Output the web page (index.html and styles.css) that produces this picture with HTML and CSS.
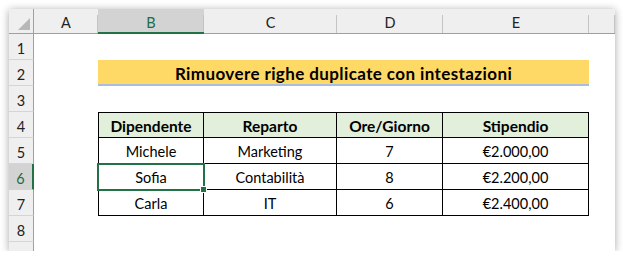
FILE: index.html
```html
<!DOCTYPE html>
<html lang="en">
<head>
  <meta charset="UTF-8">
  <title>Rimuovere righe duplicate</title>
  <link rel="stylesheet" href="styles.css">
</head>
<body>
  <div class="window">
    <div class="sheet">
      <!-- column headers -->
      <div class="corner"><span class="tri"></span></div>
      <div class="col-head">A</div>
      <div class="col-head active">B</div>
      <div class="col-head">C</div>
      <div class="col-head">D</div>
      <div class="col-head">E</div>
      <div class="col-head"></div>

      <!-- row 1 -->
      <div class="row-head">1</div>
      <div class="cell"></div><div class="cell"></div><div class="cell"></div><div class="cell"></div><div class="cell"></div><div class="cell"></div>

      <!-- row 2 -->
      <div class="row-head">2</div>
      <div class="cell"></div>
      <div class="title">Rimuovere righe duplicate con intestazioni</div>
      <div class="cell"></div>

      <!-- row 3 -->
      <div class="row-head">3</div>
      <div class="cell"></div><div class="cell"></div><div class="cell"></div><div class="cell"></div><div class="cell"></div><div class="cell"></div>

      <!-- row 4 -->
      <div class="row-head">4</div>
      <div class="cell"></div>
      <div class="t th first">Dipendente</div>
      <div class="t th">Reparto</div>
      <div class="t th">Ore/Giorno</div>
      <div class="t th">Stipendio</div>
      <div class="cell"></div>

      <!-- row 5 -->
      <div class="row-head">5</div>
      <div class="cell"></div>
      <div class="t first">Michele</div>
      <div class="t">Marketing</div>
      <div class="t">7</div>
      <div class="t">€2.000,00</div>
      <div class="cell"></div>

      <!-- row 6 -->
      <div class="row-head active">6</div>
      <div class="cell"></div>
      <div class="t first selected">Sofia</div>
      <div class="t">Contabilità</div>
      <div class="t">8</div>
      <div class="t">€2.200,00</div>
      <div class="cell"></div>

      <!-- row 7 -->
      <div class="row-head">7</div>
      <div class="cell"></div>
      <div class="t first">Carla</div>
      <div class="t">IT</div>
      <div class="t">6</div>
      <div class="t">€2.400,00</div>
      <div class="cell"></div>

      <!-- row 8 -->
      <div class="row-head">8</div>
      <div class="cell"></div><div class="cell"></div><div class="cell"></div><div class="cell"></div><div class="cell"></div><div class="cell"></div>

      <!-- row 9 -->
      <div class="row-head"></div>
      <div class="cell"></div><div class="cell"></div><div class="cell"></div><div class="cell"></div><div class="cell"></div><div class="cell"></div>
    </div>
  </div>
</body>
</html>
```

FILE: styles.css
```css
body {
  margin: 0;
  background: #ffffff;
  font-family: 'Lato', 'Liberation Sans', sans-serif;
  color: #000;
}
.window {
  margin: 9px 0 0 9px;
  width: 606px;
  height: 242px;
  overflow: hidden;
  background: #fff;
  box-shadow: 0 1px 8px rgba(0, 0, 0, 0.35);
}
.sheet {
  display: grid;
  grid-template-columns: 25px 64px 106px 133px 106px 146px 26px;
  grid-template-rows: 25px repeat(9, 26px);
  font-size: 14.5px;
}
.corner {
  background: #efefef;
  border-right: 1px solid #a0a0a0;
  border-bottom: 1px solid #a0a0a0;
  box-sizing: border-box;
  display: flex;
  align-items: flex-end;
  justify-content: flex-end;
  padding: 0 3px 3px 0;
}
.tri {
  width: 0;
  height: 0;
  border-left: 12px solid transparent;
  border-bottom: 12px solid #b7b7b7;
}
.col-head {
  background: linear-gradient(#c4c4c4, #c4c4c4) right 6px / 1px calc(100% - 6px) no-repeat, #efefef;
  border-bottom: 1px solid #a0a0a0;
  box-sizing: border-box;
  display: flex;
  align-items: center;
  justify-content: center;
  padding-top: 3px;
  color: #222;
}
.col-head.active {
  background-color: #d3d3d3;
  border-bottom: 2px solid #217346;
  color: #1e6b45;
}
.row-head {
  background: #efefef;
  border-right: 1px solid #a0a0a0;
  border-bottom: 1px solid #d5d5d5;
  box-sizing: border-box;
  display: flex;
  align-items: center;
  justify-content: center;
  padding-top: 4px;
  color: #222;
}
.row-head.active {
  background: #d3d3d3;
  border-right: 2px solid #217346;
  color: #1e6b45;
}
.title {
  grid-column: span 4;
  background: #ffd966;
  border-bottom: 2px solid #a9bce2;
  box-sizing: border-box;
  display: flex;
  align-items: center;
  justify-content: center;
  padding-top: 2px;
  font-weight: bold;
  font-size: 17px;
  letter-spacing: 0.4px;
}
.t {
  border-right: 1px solid #000;
  border-bottom: 1px solid #000;
  box-sizing: border-box;
  display: flex;
  align-items: center;
  justify-content: center;
  padding-top: 1px;
}
.t.first {
  border-left: 1px solid #000;
}
.th {
  background: #e2efda;
  border-top: 1px solid #000;
  font-weight: bold;
  font-size: 15.5px;
}
.selected {
  position: relative;
  outline: 2px solid #217346;
  outline-offset: -1px;
}
.selected::after {
  content: '';
  position: absolute;
  right: -4px;
  bottom: -4px;
  width: 5px;
  height: 5px;
  background: #217346;
  border: 1px solid #fff;
}
```
